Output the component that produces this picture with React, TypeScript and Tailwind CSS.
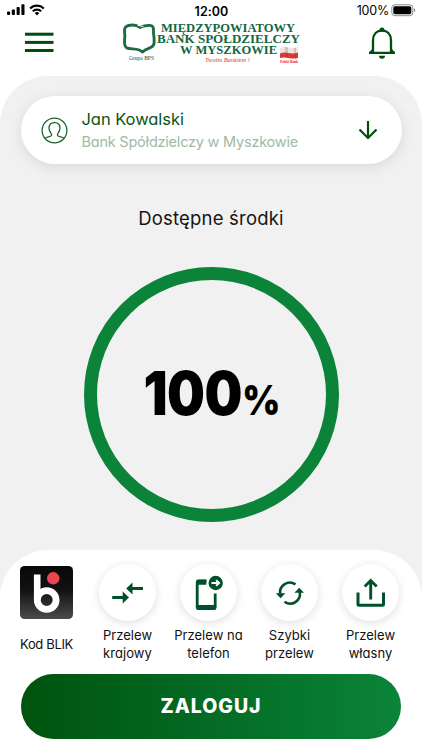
import type { ReactNode } from 'react'

const GREEN = '#00512b'

function StatusBar() {
  return (
    <div className="flex h-5 items-center justify-between pl-[7px] pr-[6px] text-black">
      <div className="flex w-[100px] items-center gap-1">
        <svg width="18" height="12" viewBox="0 0 18 12">
          <rect x="0" y="7.4" width="3.1" height="3.6" rx="0.8" />
          <rect x="4.8" y="5.4" width="3.1" height="5.6" rx="0.8" />
          <rect x="9.6" y="3" width="3.1" height="8" rx="0.8" />
          <rect x="14.4" y="0.2" width="3.1" height="10.8" rx="0.8" />
        </svg>
        <svg width="16" height="12" viewBox="0 0 16 12" fill="none" stroke="#000" strokeWidth="2.2">
          <path d="M1.2 4.5a9.7 9.7 0 0 1 13.6 0" />
          <path d="M3.8 7.3a6 6 0 0 1 8.4 0" />
          <path d="M5.7 9.1a3.4 3.4 0 0 1 4.6 0L8 11.6z" fill="#000" stroke="none" />
        </svg>
      </div>
      <span className="pt-[3px] text-[12.5px] font-semibold leading-4 tracking-[0.05px]">12:00</span>
      <div className="flex w-[100px] items-center justify-end gap-[2px] pt-px">
        <span className="pt-px text-[12.5px] leading-4 tracking-[-0.2px]">100%</span>
        <svg width="25" height="13" viewBox="0 0 25 13">
          <rect x="0.8" y="0.8" width="21" height="10.9" rx="3" fill="#fff" stroke="#8a8a8a" />
          <rect x="2.3" y="2.3" width="18" height="7.9" rx="1.6" />
          <path d="M23 4.3c1.7.5 1.7 3.4 0 3.9z" fill="#8a8a8a" />
        </svg>
      </div>
    </div>
  )
}

function BankLogo() {
  return (
    <svg width="182" height="48" viewBox="0 0 182 48" fontFamily="'Liberation Serif', serif">
      <path
        d="M8.5 5.5C3.5 7 4.5 10 4.8 15C5 20 3 25 6.5 27.7C10 30 18 27.5 22.5 32C27 27.5 31.5 29 33.500 25C35.500 21 33 15 33.500 10C33.500 5.500 31 5 27.500 5.500C24 5.700 22 6.500 20 7.500C17 5 12.500 4.500 8.500 5.500Z"
        fill="none" stroke="#1d6b43" strokeWidth="2.900" strokeLinejoin="round"
      />
      <path d="M17.500 5.200L23.500 6.700" stroke="#fff" strokeWidth="1" />
      <text x="9" y="39.500" fontSize="5.500" fill="#174d31" textLength="25" lengthAdjust="spacingAndGlyphs">Grupa BPS</text>
      <g fontWeight="700" fontSize="12" fill="#14673f">
        <text x="41" y="12.300" textLength="134" lengthAdjust="spacingAndGlyphs">MIĘDZYPOWIATOWY</text>
        <text x="37" y="23.400" textLength="143" lengthAdjust="spacingAndGlyphs">BANK SPÓŁDZIELCZY</text>
        <text x="60" y="33.500" textLength="97" lengthAdjust="spacingAndGlyphs">W MYSZKOWIE</text>
      </g>
      <text x="85" y="41.700" fontSize="6" fontStyle="italic" fill="#e3343b" textLength="45" lengthAdjust="spacingAndGlyphs">Twoim Bankiem !</text>
      <path d="M160 28c5-3 10 2 18-1v6.500c-7 3-13-2-18 1z" fill="#e9e5e3" />
      <path d="M160 33.500c6-3 11 2 18-1v5.500c-7 2-12-2-18 0z" fill="#dc3932" />
      <path d="M165 26.500l3 1v10l-3-.5zM174 28l2-.3v9.500l-2 .5z" fill="#962d2d" opacity=".22" />
      <text x="160" y="43" fontSize="4.800" fontWeight="700" fill="#d5242b" textLength="18" lengthAdjust="spacingAndGlyphs">Polski Bank</text>
    </svg>
  )
}

function Header() {
  return (
    <header className="flex h-14 items-start pl-[25px] pr-[26px]">
      <svg className="mt-[12px]" width="29" height="21" viewBox="0 0 29 21" fill="#004d0c">
        <rect y="0.700" width="28.500" height="3" />
        <rect y="8.900" width="28.500" height="3" />
        <rect y="17" width="28.500" height="3" />
      </svg>
      <div className="ml-[66px]"><BankLogo /></div>
      <svg className="ml-auto mt-[7px]" width="28" height="32" viewBox="0 0 28 32">
        <path d="M5 25V13.500C5 7.500 8.500 3.700 14 3.700S23 7.500 23 13.500V25" fill="none" stroke="#004d0c" strokeWidth="2.300" />
        <path d="M1 24.800h26v2.300H1zM11.500 4.500V3a2.500 2.500 0 0 1 5 0v1.500zM11 28.800h6a3 3 0 0 1-6 0z" fill="#004d0c" />
        <path d="M5 21v4H1.500zM23 21v4h3.500z" fill="#004d0c" />
      </svg>
    </header>
  )
}

function AccountCard() {
  return (
    <div className="mx-auto flex h-[68px] w-[381px] items-center rounded-full bg-white pl-5 pr-[24px] shadow-[0_3px_14px_rgba(0,0,0,0.10)]">
      <svg width="27" height="27" viewBox="0 0 27 27" fill="none" stroke="#17642a" strokeWidth="1.250">
        <circle cx="13.500" cy="13.500" r="12.400" />
        <path d="M3.800 21.200c2.600-1.500 5.700-1.200 6.700-2.700 1.100-1.600-2.500-3-2.500-7.200C8 7.600 10.200 5.500 13.500 5.500S19 7.600 19 11.300c0 4.200-3.600 5.600-2.500 7.200 1 1.500 4.100 1.200 6.700 2.700" />
      </svg>
      <div className="ml-[14px] flex flex-1 flex-col">
        <span className="text-[16.500px] leading-[23px] tracking-[-0.05px] text-[#0b5417]">Jan Kowalski</span>
        <span className="text-[14.500px] leading-[22px] tracking-[-0.22px] text-[#9ebba2]">Bank Spółdzielczy w Myszkowie</span>
      </div>
      <svg width="20" height="20" viewBox="0 0 20 20" fill="none" stroke="#004d0c" strokeWidth="2.200">
        <path d="M10 1v17M1.500 9.500L10 18l8.500-8.500" />
      </svg>
    </div>
  )
}

function BlikIcon() {
  return (
    <svg width="53" height="53" viewBox="0 0 53 53">
      <defs>
        <linearGradient id="blikTile" x2="0" y2="1">
          <stop stopColor="#080808" /><stop offset="0.450" stopColor="#111" /><stop offset="1" stopColor="#4b4b4b" />
        </linearGradient>
        <linearGradient id="blikDot" x1="0" y1="1" x2="1" y2="0">
          <stop stopColor="#e83d78" /><stop offset="1" stopColor="#ec4c2d" />
        </linearGradient>
      </defs>
      <rect width="53" height="53" rx="4.500" fill="url(#blikTile)" />
      <circle cx="33.200" cy="12.300" r="6.200" fill="url(#blikDot)" />
      <path d="M17.200 8.500V34" stroke="#fff" strokeWidth="6.600" />
      <circle cx="26.700" cy="34" r="9.400" fill="none" stroke="#fff" strokeWidth="6.800" />
    </svg>
  )
}

function RoundIcon({ children }: { children: ReactNode }) {
  return (
    <div className="flex size-[57px] items-center justify-center rounded-full bg-white shadow-[0_2px_10px_rgba(0,0,0,0.13)]">
      <svg width="36" height="36" viewBox="0 0 36 36" fill="none" stroke={GREEN} strokeWidth="2.600">{children}</svg>
    </div>
  )
}

const actions = [
  {
    label: ['Przelew', 'krajowy'],
    icon: (
      <>
        <path d="M2.200 22.500h12M33 13.500H22" strokeWidth="2.900" />
        <path d="M12.700 16.500l6.300 6-6.300 6zM22.500 7.500l-6.300 6 6.300 6z" fill={GREEN} stroke="none" />
      </>
    ),
  },
  {
    label: ['Przelew na', 'telefon'],
    icon: (
      <>
        <path d="M15.500 6H8Q6.200 6 6.200 8v24Q6.200 33.500 8 33.500h14.500Q24.200 33.500 24.200 32V18.500" strokeWidth="2.800" />
        <path d="M5.500 4.700h9.800v5H5.500zM5.500 30h19.500v4.500H5.500z" fill={GREEN} stroke="none" />
        <circle cx="24.700" cy="8" r="7.200" fill={GREEN} stroke="none" />
        <path d="M20.500 8h7.500M25.200 5.200l2.900 2.800-2.900 2.800" stroke="#fff" strokeWidth="1.900" />
      </>
    ),
  },
  {
    label: ['Szybki', 'przelew'],
    icon: (
      <>
        <path d="M23.500 9.400A9.800 9.800 0 0 0 8.200 19M12.500 26.800A9.800 9.800 0 0 0 27.800 17" />
        <path d="M3.800 18.200h9.600l-4.800 5zM22.400 17.800H32l-4.800-5z" fill={GREEN} stroke="none" />
      </>
    ),
  },
  {
    label: ['Przelew', 'własny'],
    icon: (
      <>
        <path d="M5 17.500V29.500q0 .8.800.8h23.900q.8 0 .8-.8V17.500" strokeWidth="3" />
        <path d="M17.700 24.500V6M11.700 11.500l6-6 6 6" strokeWidth="2.900" />
      </>
    ),
  },
]

export default function App() {
  return (
    <div className="flex h-[750px] w-[422px] flex-col overflow-hidden bg-white font-['Inter','Noto_Sans',sans-serif] [font-feature-settings:'cv11']">
      <StatusBar />
      <Header />
      <main className="flex h-[674px] flex-col rounded-t-[48px] bg-[#f1f1f1] pt-5">
        <AccountCard />
        <h1 className="mt-[40px] text-center text-[18.500px] leading-7 tracking-[0.200px] text-[#151515]">Dostępne środki</h1>
        <div className="mx-auto mt-[35px] flex size-[255px] shrink-0 items-center justify-center rounded-full border-[13px] border-[#0b8439]">
          <div className="flex scale-x-[0.89] items-baseline pt-[3px] font-black text-black">
            <span className="text-[60px] leading-[64px] tracking-[-0.5px]">100</span>
            <span className="text-[41px] tracking-[-1px]">%</span>
          </div>
        </div>
        <section className="mt-[27.5px] flex flex-1 flex-col rounded-t-[48px] bg-white pt-[14.5px]">
          <div className="ml-[6px] flex h-[110px]">
            <div className="flex w-[81px] flex-col items-center pt-[2px]">
              <BlikIcon />
              <span className="mt-[16px] text-[13px] leading-[18px] tracking-[-0.35px] text-[#111]">Kod BLIK</span>
            </div>
            {actions.map(({ label, icon }) => (
              <div key={label.join(' ')} className="flex w-[81px] flex-col items-center">
                <RoundIcon>{icon}</RoundIcon>
                <div className="mt-[5px] whitespace-nowrap text-center text-[13px] leading-[18.400px] tracking-[0.05px] text-[#111]">
                  {label[0]}<br />{label[1]}
                </div>
              </div>
            ))}
          </div>
          <button className="mx-auto h-[65px] w-[380px] rounded-full bg-linear-to-r from-[#00530d] to-[#0b8439] text-[19.500px] font-extrabold tracking-[1px] text-white">ZALOGUJ</button>
        </section>
      </main>
    </div>
  )
}
